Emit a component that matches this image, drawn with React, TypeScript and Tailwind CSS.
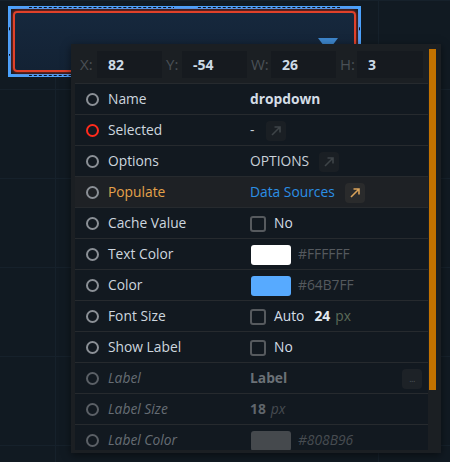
import React from 'react';

// Property inspector for a selected "dropdown" widget on the canvas.

type Row = {
  label: string;
  tone?: 'normal' | 'selected' | 'accent' | 'muted';
  value: React.ReactNode;
};

function Radio({ tone }: { tone?: Row['tone'] }) {
  const color =
    tone === 'selected'
      ? 'border-[#ff2b1c]'
      : tone === 'muted'
        ? 'border-[#5b6066]'
        : 'border-[#8b9096]';
  return <span className={`w-[13px] h-[13px] rounded-full border-2 ${color} shrink-0`} />;
}

function LinkBtn({ active }: { active?: boolean }) {
  return (
    <span
      className={`w-[20px] h-[20px] flex items-center justify-center rounded-sm ${
        active ? 'bg-[#2a2b2c] text-[#d9a35a]' : 'bg-[#1a1f24] text-[#3e4448]'
      }`}
    >
      <svg width="12" height="12" viewBox="0 0 12 12" fill="none" stroke="currentColor" strokeWidth="1.6">
        <path d="M2 10L10 2M4.5 2H10V7.5" />
      </svg>
    </span>
  );
}

function Check({ label }: { label: string }) {
  return (
    <span className="flex items-center gap-[8px]">
      <span className="w-[16px] h-[16px] rounded-[3px] border-2 border-[#565a5e]" />
      <span className="text-[#d4dde6]">{label}</span>
    </span>
  );
}

function Swatch({ color, hex, muted }: { color: string; hex: string; muted?: boolean }) {
  return (
    <span className="flex items-center gap-[7px] pl-[1px]">
      <span className={`w-[40px] h-[20px] rounded-[3px] ${color}`} />
      <span className={muted ? 'italic text-[#474c51]' : 'text-[#55595e]'}>{hex}</span>
    </span>
  );
}

const rows: Row[] = [
  { label: 'Name', value: <span className="font-bold text-[#d4dde6]">dropdown</span> },
  {
    label: 'Selected',
    tone: 'selected',
    value: (
      <span className="flex items-center gap-[6px]">
        <span className="text-[#c8d0d8] w-[10px]">-</span>
        <LinkBtn />
      </span>
    ),
  },
  {
    label: 'Options',
    value: (
      <span className="flex items-center gap-[10px]">
        <span className="text-[#c8d0d8]">OPTIONS</span>
        <LinkBtn />
      </span>
    ),
  },
  {
    label: 'Populate',
    tone: 'accent',
    value: (
      <span className="flex items-center gap-[10px]">
        <span className="text-[#2b8fe6]">Data Sources</span>
        <LinkBtn active />
      </span>
    ),
  },
  { label: 'Cache Value', value: <Check label="No" /> },
  { label: 'Text Color', value: <Swatch color="bg-white" hex="#FFFFFF" /> },
  { label: 'Color', value: <Swatch color="bg-[#57aaff]" hex="#64B7FF" /> },
  {
    label: 'Font Size',
    value: (
      <span className="flex items-center">
        <Check label="Auto" />
        <span className="ml-[10px] font-bold text-[#e4eaf0]">24</span>
        <span className="ml-[5px] text-[#5b6b58]">px</span>
      </span>
    ),
  },
  { label: 'Show Label', value: <Check label="No" /> },
  {
    label: 'Label',
    tone: 'muted',
    value: (
      <span className="flex items-center justify-between w-full pr-[6px]">
        <span className="font-bold text-[#6b7177]">Label</span>
        <span className="w-[20px] h-[20px] rounded-sm bg-[#1d2227] flex items-center justify-center text-[#4f555b] text-[9px] tracking-tighter">
          ...
        </span>
      </span>
    ),
  },
  {
    label: 'Label Size',
    tone: 'muted',
    value: (
      <span className="flex items-center gap-[5px]">
        <span className="font-bold text-[#60666c]">18</span>
        <span className="italic text-[#464b50]">px</span>
      </span>
    ),
  },
  { label: 'Label Color', tone: 'muted', value: <Swatch color="bg-[#45494d]" hex="#808B96" muted /> },
];

function Coord({ label, value, lw, iw }: { label: string; value: string; lw: string; iw: string }) {
  return (
    <div className="flex items-center">
      <span className={`${lw} text-[#4a5056] text-[15px]`}>{label}</span>
      <span className={`${iw} h-[27px] bg-[#161a1f] flex items-center pl-[11px] font-bold text-[14px] text-[#cddae6]`}>
        {value}
      </span>
    </div>
  );
}

export default function App() {
  return (
    <div
      className="relative w-[450px] h-[462px] overflow-hidden bg-[#111a22] text-[13.8px]"
      style={{ fontFamily: '"Open Sans", "Noto Sans", "Liberation Sans", sans-serif' }}
    >
      {/* faint canvas grid */}
      <div className="absolute inset-0 bg-[linear-gradient(to_right,#16212b_1px,transparent_1px),linear-gradient(to_bottom,#16212b_1px,transparent_1px)] bg-[size:323px_89px] bg-[position:55px_0px]" />

      {/* selected widget on the canvas */}
      <div className="absolute left-[8px] top-[6px] w-[353px] h-[71px] border-[3px] border-[#4aa3ff]">
        <div className="absolute -left-[2px] -top-[2px] -right-[2px] -bottom-[2px] border border-dashed border-[#06101c]" />
        <span className="absolute -left-[3px] -top-[3px] w-[21px] h-[3px] bg-[#4aa3ff]" />
        <span className="absolute -left-[3px] -top-[3px] w-[3px] h-[21px] bg-[#4aa3ff]" />
        <span className="absolute left-[163px] -top-[3px] w-[22px] h-[3px] bg-[#4aa3ff]" />
        <span className="absolute -right-[3px] -top-[3px] w-[21px] h-[3px] bg-[#4aa3ff]" />
        <span className="absolute -right-[3px] -top-[3px] w-[3px] h-[21px] bg-[#4aa3ff]" />
        <span className="absolute -left-[3px] top-[23px] w-[3px] h-[22px] bg-[#4aa3ff]" />
        <span className="absolute -right-[3px] top-[23px] w-[3px] h-[22px] bg-[#4aa3ff]" />
        <span className="absolute -left-[3px] -bottom-[3px] w-[21px] h-[3px] bg-[#4aa3ff]" />
        <span className="absolute -left-[3px] -bottom-[3px] w-[3px] h-[21px] bg-[#4aa3ff]" />
        <div className="absolute left-[2px] top-[2px] right-[2px] bottom-[2px] rounded-[4px] border-2 border-[#e0412a] shadow-[0_0_4px_#c0301c] bg-[linear-gradient(to_bottom,#16283d,#132234)]">
          <svg className="absolute right-[16px] top-[25px]" width="20" height="8" viewBox="0 0 20 8">
            <path d="M0 0H20L14 8H6Z" fill="#3d86cc" />
          </svg>
        </div>
      </div>

      {/* property panel */}
      <div className="absolute left-[71px] top-[44px] w-[370px] h-[409px] bg-[#1b1f23] shadow-[0_2px_8px_rgba(0,0,0,0.5)] flex pl-[4px] pt-[5px] pr-[4px] pb-[3px]">
        <div className="flex-1 flex flex-col overflow-hidden">
          <div className="shrink-0 flex items-center gap-[4px] h-[34px] pl-[5px] pb-[3px]">
            <Coord label="X:" value="82" lw="w-[17px]" iw="w-[65px]" />
            <Coord label="Y:" value="-54" lw="w-[16px]" iw="w-[65px]" />
            <Coord label="W:" value="26" lw="w-[20px]" iw="w-[65px]" />
            <Coord label="H:" value="3" lw="w-[17px]" iw="w-[66px]" />
          </div>
          {rows.map((r) => (
            <div
              key={r.label}
              className={`flex items-center h-[31px] shrink-0 border-t border-[#262a2e] ${
                r.tone === 'accent' ? 'bg-[#1e2125]' : 'bg-[#121920]'
              }`}
            >
              <div className="w-[175px] flex items-center gap-[9px] pl-[11px]">
                <Radio tone={r.tone} />
                <span
                  className={
                    r.tone === 'accent'
                      ? 'text-[#e5a24a]'
                      : r.tone === 'muted'
                        ? 'italic text-[#666d74]'
                        : 'text-[#cdd6df]'
                  }
                >
                  {r.label}
                </span>
              </div>
              <div className="flex-1 flex items-center pt-[1px]">{r.value}</div>
            </div>
          ))}
        </div>
        <div className="w-[8px] ml-[1px] flex flex-col">
          <div className="w-[7px] h-[341px] bg-[#c27200]" />
        </div>
      </div>
    </div>
  );
}
